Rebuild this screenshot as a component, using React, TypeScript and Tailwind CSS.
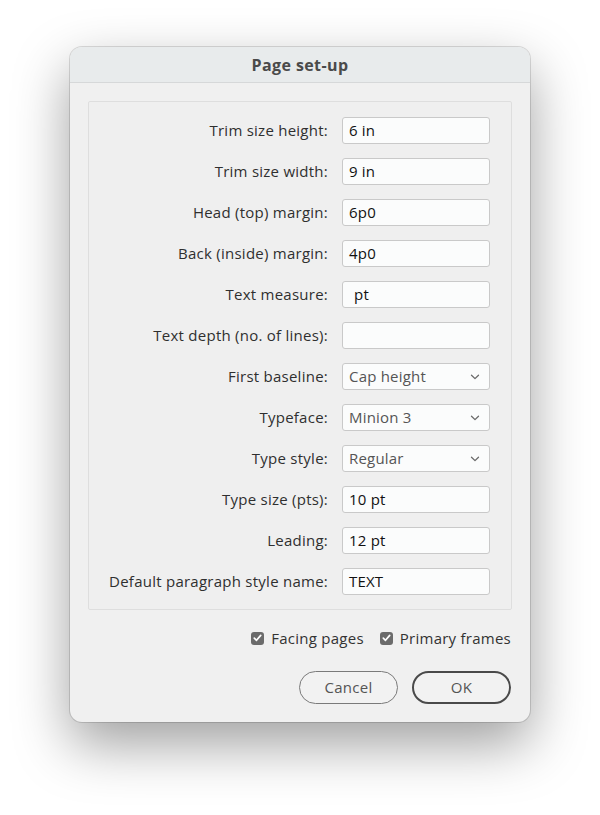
const font = { fontFamily: '"Open Sans", "Noto Sans", sans-serif' };

type Row = { label: string; value: string; select?: boolean; pad?: boolean };

const rows: Row[] = [
  { label: "Trim size height:", value: "6 in" },
  { label: "Trim size width:", value: "9 in" },
  { label: "Head (top) margin:", value: "6p0" },
  { label: "Back (inside) margin:", value: "4p0" },
  { label: "Text measure:", value: "pt", pad: true },
  { label: "Text depth (no. of lines):", value: "" },
  { label: "First baseline:", value: "Cap height", select: true },
  { label: "Typeface:", value: "Minion 3", select: true },
  { label: "Type style:", value: "Regular", select: true },
  { label: "Type size (pts):", value: "10 pt" },
  { label: "Leading:", value: "12 pt" },
  { label: "Default paragraph style name:", value: "TEXT" },
];

function Chevron() {
  return (
    <svg width="10" height="6" viewBox="0 0 10 6" className="shrink-0">
      <path d="M1.5 1.2 L5 4.6 L8.5 1.2" fill="none" stroke="#6a6a6a" strokeWidth="1.3" strokeLinecap="round" strokeLinejoin="round" />
    </svg>
  );
}

function Check() {
  return (
    <span className="w-[13px] h-[13px] rounded-[3px] bg-[#6b6b6b] flex items-center justify-center shrink-0">
      <svg width="9" height="8" viewBox="0 0 9 8">
        <path d="M1.3 4.2 L3.5 6.3 L7.7 1.4" fill="none" stroke="#ffffff" strokeWidth="1.7" strokeLinecap="round" strokeLinejoin="round" />
      </svg>
    </span>
  );
}

export default function App() {
  return (
    <div className="w-[600px] h-[815px] bg-white pt-[47px] pl-[70px]" style={font}>
      <div className="w-[460px] h-[675px] rounded-[12px] bg-[#f0f0f0] overflow-hidden flex flex-col shadow-[0_0_0_1px_rgba(0,0,0,0.13),0_22px_55px_rgba(0,0,0,0.38)]">
        <div className="h-[36px] shrink-0 bg-[#e8ebec] border-b border-[#d6d8d9] flex items-center justify-center">
          <span className="text-[16px] font-bold text-[#4a4a4a] tracking-[0.4px]">Page set-up</span>
        </div>

        <div className="px-[18px] pt-[18px]">
          <div className="border border-[#dedede] rounded-[2px] bg-[#efefef] pt-[15px] pb-[14px] pr-[21px] grid grid-cols-[1fr_148px] gap-x-[14px] gap-y-[14px] items-center">
            {rows.map((r) => (
              <div key={r.label} className="contents">
                <div className="text-right text-[15px] tracking-[0.25px] text-[#2f2f2f] leading-none whitespace-nowrap">
                  {r.label}
                </div>
                <div className="h-[27px] rounded-[3px] border border-[#c9c9c9] bg-[#fbfcfc] flex items-center justify-between pl-[6px] pr-[9px]">
                  <span
                    className={
                      r.select
                        ? "text-[15px] tracking-[0.2px] text-[#555555]"
                        : r.pad
                          ? "text-[15px] tracking-[0.2px] text-[#111111] pl-[5px]"
                          : "text-[15px] tracking-[0.2px] text-[#111111]"
                    }
                  >
                    {r.value}
                  </span>
                  {r.select && <Chevron />}
                </div>
              </div>
            ))}
          </div>
        </div>

        <div className="flex justify-end items-center gap-[16px] pr-[19px] pt-[17px]">
          <label className="flex items-center gap-[7px]">
            <Check />
            <span className="text-[15px] tracking-[0.25px] text-[#333333]">Facing pages</span>
          </label>
          <label className="flex items-center gap-[7px]">
            <Check />
            <span className="text-[15px] tracking-[0.25px] text-[#333333]">Primary frames</span>
          </label>
        </div>

        <div className="flex justify-end gap-[14px] pr-[19px] pt-[21px]">
          <button className="w-[99px] h-[33px] rounded-full border border-[#7a7a7a] text-[15px] tracking-[0.3px] text-[#555555] bg-[#f2f2f2]">
            Cancel
          </button>
          <button className="w-[99px] h-[33px] rounded-full border-2 border-[#4a4a4a] text-[15px] tracking-[0.3px] text-[#555555] bg-[#f2f2f2]">
            OK
          </button>
        </div>
      </div>
    </div>
  );
}
